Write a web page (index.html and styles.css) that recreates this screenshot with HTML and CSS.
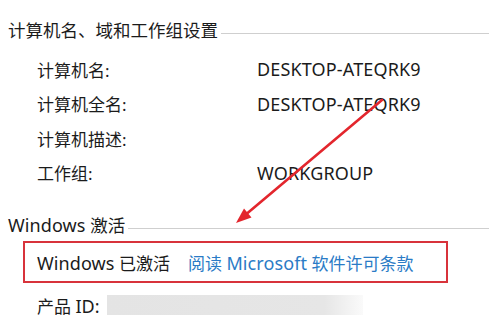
FILE: index.html
```html
<!DOCTYPE html>
<html lang="zh-CN">
<head>
	<meta charset="UTF-8">
	<title>系统</title>
	<link rel="stylesheet" href="styles.css">
</head>
<body>
	<div class="page">
		<div class="group-title">
			<span>计算机名、域和工作组设置</span>
			<div class="rule"></div>
		</div>
		<div class="info">
			<div class="label">计算机名:</div>
			<div class="value">DESKTOP-ATEQRK9</div>
			<div class="label">计算机全名:</div>
			<div class="value">DESKTOP-ATEQRK9</div>
			<div class="label">计算机描述:</div>
			<div class="value"></div>
			<div class="label">工作组:</div>
			<div class="value">WORKGROUP</div>
		</div>

		<div class="group-title second">
			<span><span class="lat">Windows</span> 激活</span>
			<div class="rule"></div>
		</div>
		<div class="activated">
			<span><span class="lat">Windows</span> 已激活</span>
			<a class="terms" href="#">阅读 <span class="lat">Microsoft</span> 软件许可条款</a>
		</div>
		<div class="product">
			<span>产品 <span class="lat">ID:</span></span>
			<span class="blurred"></span>
		</div>

		<svg class="arrow" width="489" height="323" viewBox="0 0 489 323">
			<line x1="382" y1="100" x2="247" y2="213.5" stroke="#e3262d" stroke-width="2.6" stroke-linecap="round"/>
			<polygon points="236,223 251.5,217.5 244,208.5" fill="#e3262d"/>
		</svg>
	</div>
</body>
</html>
```
FILE: styles.css
```css
* {
	box-sizing: border-box;
	margin: 0;
	padding: 0;
}

body {
	background: #fff;
	font-family: "Noto Sans", "Noto Sans CJK SC", sans-serif;
	font-size: 17px;
	color: #1b1b1b;
}

.page {
	position: relative;
	width: 489px;
	height: 323px;
	padding: 18px 0 0 8px;
	overflow: hidden;
}

.lat {
	font-size: 18px;
	letter-spacing: 0.1px;
}

.group-title {
	display: flex;
	align-items: center;
	height: 24px;
	line-height: 24px;
	font-size: 17.5px;
}

.group-title .rule {
	flex: 1;
	height: 1px;
	margin: 7px 0 0 3px;
	background: #cfcfcf;
}

.group-title.second {
	margin-top: 23px;
}

.info {
	display: grid;
	grid-template-columns: 220px 1fr;
	grid-auto-rows: 34.5px;
	align-items: center;
	margin-top: 10px;
	padding-left: 29px;
}

.value {
	font-size: 18px;
	letter-spacing: 0.15px;
}

.activated {
	display: flex;
	align-items: center;
	width: 425px;
	height: 42px;
	margin: 4px 0 0 15px;
	padding-left: 12px;
	border: 2px solid #d8333b;
}

.terms {
	margin-left: 18px;
	color: #2a7bc6;
	text-decoration: none;
}

.product {
	display: flex;
	align-items: center;
	height: 24px;
	margin-top: 10px;
	padding-left: 29px;
}

.blurred {
	display: inline-block;
	width: 256px;
	height: 20px;
	margin-left: 7px;
	background: linear-gradient(to right, #e4e4e4 0%, #e6e6e6 85%, #fafafa 100%);
}

.arrow {
	position: absolute;
	left: 0;
	top: 0;
	pointer-events: none;
}
```
